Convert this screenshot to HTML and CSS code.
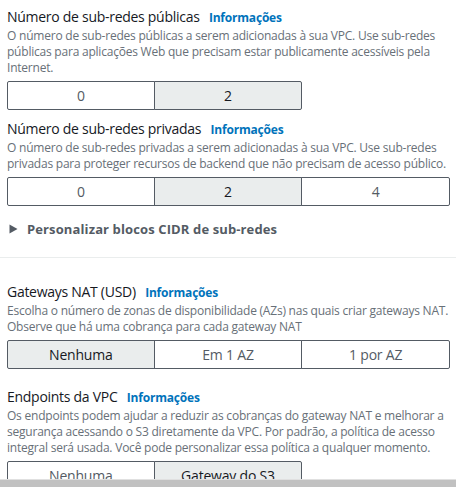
FILE: index.html
```html
<!DOCTYPE html>
<html lang="pt-BR">
<head>
<meta charset="utf-8">
<link rel="stylesheet" href="styles.css">
</head>
<body>
<div class="page">
  <section class="field">
    <div class="label">Número de sub-redes públicas <a class="info">Informações</a></div>
    <div class="desc">O número de sub-redes públicas a serem adicionadas à sua VPC. Use sub-redes<br>públicas para aplicações Web que precisam estar publicamente acessíveis pela<br>Internet.</div>
    <div class="seg">
      <button class="opt">0</button>
      <button class="opt on last">2</button>
    </div>
  </section>

  <section class="field tight">
    <div class="label">Número de sub-redes privadas <a class="info">Informações</a></div>
    <div class="desc">O número de sub-redes privadas a serem adicionadas à sua VPC. Use sub-redes<br>privadas para proteger recursos de backend que não precisam de acesso público.</div>
    <div class="seg">
      <button class="opt">0</button>
      <button class="opt on">2</button>
      <button class="opt last">4</button>
    </div>
  </section>

  <div class="expander">
    <svg class="caret" width="9" height="10" viewBox="0 0 9 10"><path d="M0.5 0.5 L8.5 5 L0.5 9.5 Z" fill="#545b64"/></svg>
    <span>Personalizar blocos CIDR de sub-redes</span>
  </div>
</div>

<hr class="divider">

<div class="page">
  <section class="field nat">
    <div class="label">Gateways NAT (USD) <a class="info">Informações</a></div>
    <div class="desc">Escolha o número de zonas de disponibilidade (AZs) nas quais criar gateways NAT.<br>Observe que há uma cobrança para cada gateway NAT</div>
    <div class="seg">
      <button class="opt on">Nenhuma</button>
      <button class="opt">Em 1 AZ</button>
      <button class="opt last">1 por AZ</button>
    </div>
  </section>

  <section class="field endpoints">
    <div class="label">Endpoints da VPC <a class="info">Informações</a></div>
    <div class="desc">Os endpoints podem ajudar a reduzir as cobranças do gateway NAT e melhorar a<br>segurança acessando o S3 diretamente da VPC. Por padrão, a política de acesso<br>integral será usada. Você pode personalizar essa política a qualquer momento.</div>
    <div class="seg">
      <button class="opt">Nenhuma</button>
      <button class="opt on last">Gateway do S3</button>
    </div>
  </section>
</div>

<div class="hscroll"></div>
</body>
</html>
```
FILE: styles.css
```css
* { box-sizing: border-box; }
html, body { margin: 0; padding: 0; background: #ffffff; }
body {
  font-family: "Open Sans", "Noto Sans", sans-serif;
  color: #16191f;
  overflow: hidden;
  height: 487px;
}
.page { padding: 7px 6px 0 7px; }
.field { margin: 0; }
.field.tight { margin-top: 9px; }
.label {
  font-size: 14px;
  line-height: 20px;
  letter-spacing: -0.28px;
  color: #16191f;
}
.info {
  font-size: 12px;
  font-weight: 700;
  color: #0073bb;
  letter-spacing: -0.2px;
  margin-left: 6px;
}
.desc {
  font-size: 12px;
  line-height: 16px;
  color: #687078;
  white-space: nowrap;
  letter-spacing: -0.22px;
}
.seg {
  display: grid;
  grid-template-columns: repeat(3, 1fr);
  margin-top: 5px;
  width: 443px;
}
.opt {
  height: 29px;
  border: 1px solid #545b64;
  background: #ffffff;
  color: #545b64;
  font-family: "Open Sans", "Noto Sans", sans-serif;
  font-size: 14px;
  letter-spacing: -0.2px;
  padding: 0;
  margin: 0 0 0 -1px;
  border-radius: 0;
}
.opt:first-child { margin-left: 0; border-radius: 2px 0 0 2px; }
.opt.last { border-radius: 0 2px 2px 0; }
.opt.on { background: #eaeded; color: #16191f; }
.expander {
  display: flex;
  align-items: center;
  gap: 9px;
  margin-top: 13px;
  padding-left: 2px;
  height: 20px;
  font-size: 13px;
  font-weight: 700;
  letter-spacing: 0.12px;
  color: #545b64;
}
.caret { display: block; }
.divider {
  border: 0;
  height: 1px;
  background: #eaeded;
  margin: 18px 0 0 0;
}
.nat { margin-top: 17px; }
.endpoints { margin-top: 18px; }
.hscroll {
  position: fixed;
  left: 0;
  right: 0;
  bottom: 0;
  height: 8px;
  background: #c1c1c1;
  border-top: 1px solid #e0e0e0;
}
```
